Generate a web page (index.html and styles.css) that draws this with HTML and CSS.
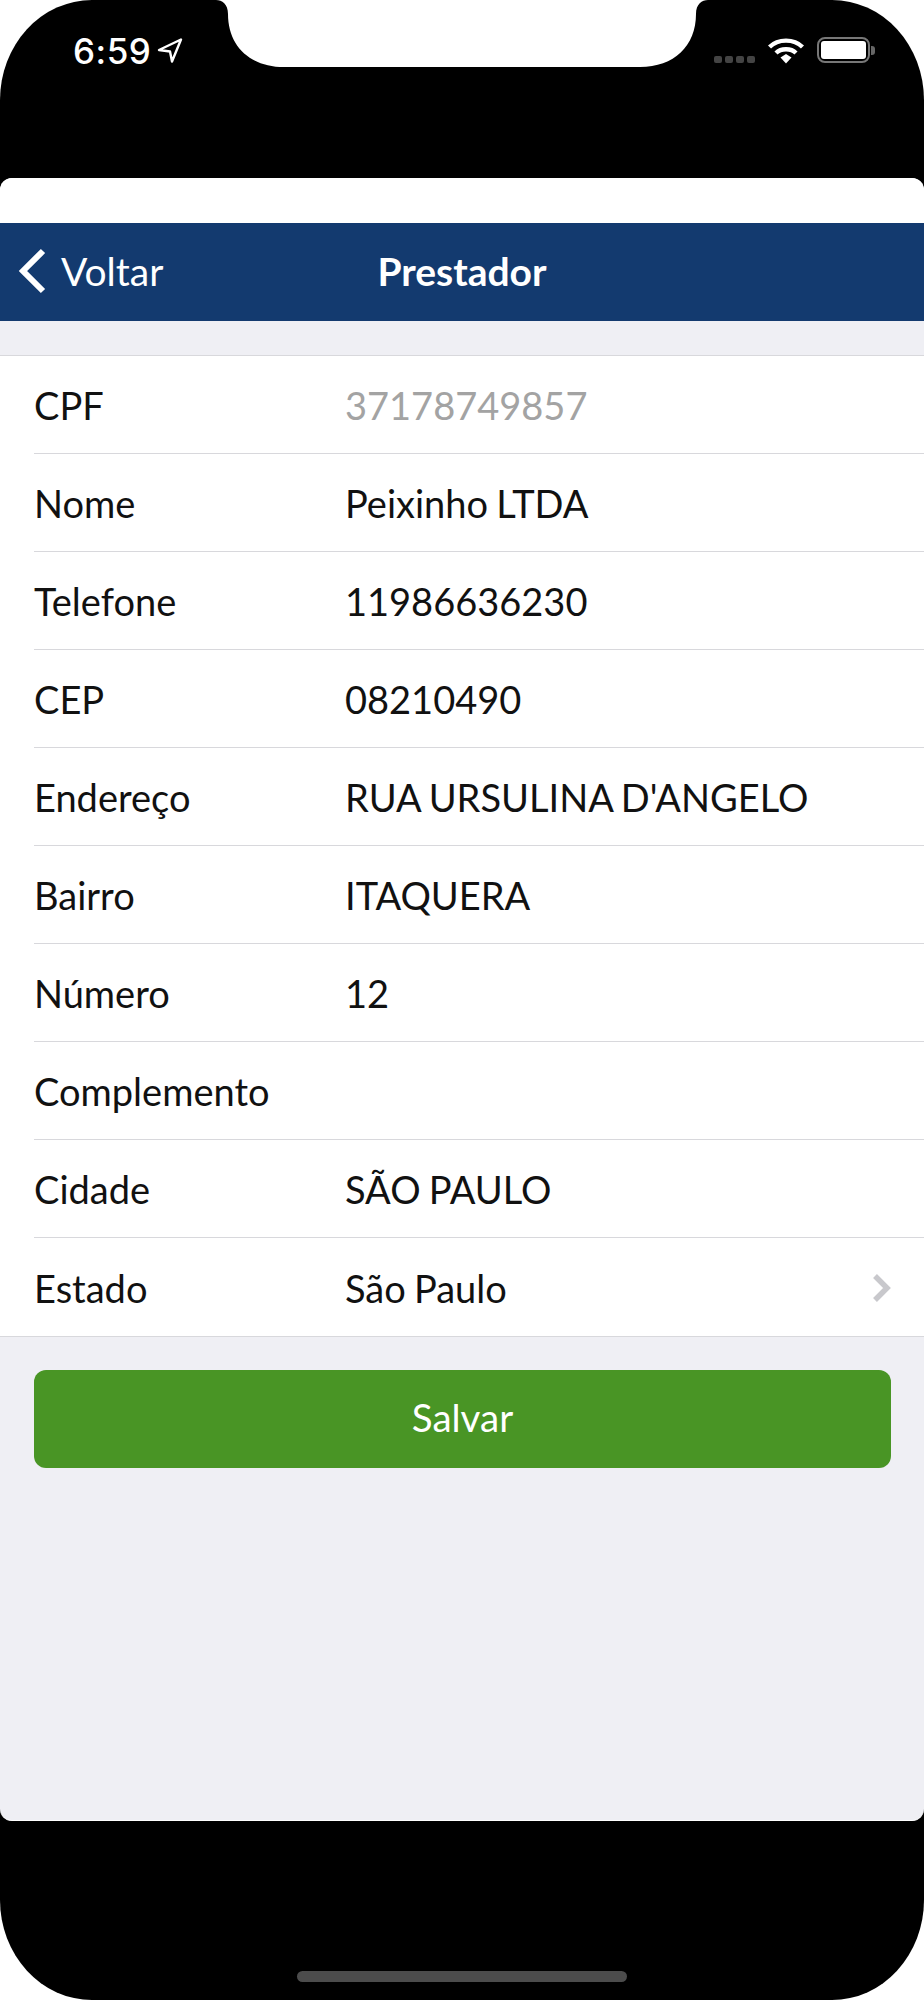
FILE: index.html
```html
<!DOCTYPE html>
<html lang="en">

<head>
    <meta charset="UTF-8">
    <meta name="viewport" content="width=device-width, initial-scale=1.0">
    <title>Prestador</title>
    <link rel="stylesheet" href="styles.css">
</head>

<body>
    <div class="phone">
        <svg class="notch" width="492" height="68" viewBox="0 0 492 68">
            <path d="M0 0 C6 0 12 4 12 14 C12 46 34 67 68 67 L424 67 C458 67 480 46 480 14 C480 4 486 0 492 0 Z" fill="#fff"/>
        </svg>
        <div class="status-bar">
            <div class="status-left">
                <span class="clock">6:59</span>
                <svg class="location" width="26" height="25" viewBox="0 0 26 25">
                    <path d="M24 1.500 L2 12 L13 13.500 L15 23.500 Z" fill="none" stroke="#fff" stroke-width="2.400" stroke-linejoin="round"/>
                </svg>
            </div>
            <div class="status-right">
                <div class="signal"><i></i><i></i><i></i><i></i></div>
                <svg class="wifi" width="36" height="27" viewBox="0 0 36 27">
                    <path d="M1.500 10 C10 1.500 26 1.500 34.500 10" fill="none" stroke="#fff" stroke-width="4.400"/>
                    <path d="M8 16 C13 11 23 11 28 16" fill="none" stroke="#fff" stroke-width="4.400"/>
                    <path d="M12.500 20.500 L18 17 L23.500 20.500 L18 26.500 Z" fill="#fff"/>
                </svg>
                <div class="battery"><div class="battery-fill"></div></div>
                <div class="battery-cap"></div>
            </div>
        </div>

        <div class="sheet">
            <div class="sheet-top"></div>
            <header class="navbar">
                <div class="back">
                    <svg width="30" height="46" viewBox="0 0 30 46">
                        <path d="M26 3 L6 23 L26 43" fill="none" stroke="#fff" stroke-width="6"/>
                    </svg>
                    <span>Voltar</span>
                </div>
                <h1>Prestador</h1>
            </header>

            <div class="form">
                <div class="row"><div class="row-inner"><span class="label">CPF</span><span class="value muted">37178749857</span></div></div>
                <div class="row"><div class="row-inner"><span class="label">Nome</span><span class="value">Peixinho LTDA</span></div></div>
                <div class="row"><div class="row-inner"><span class="label">Telefone</span><span class="value">11986636230</span></div></div>
                <div class="row"><div class="row-inner"><span class="label">CEP</span><span class="value">08210490</span></div></div>
                <div class="row"><div class="row-inner"><span class="label">Endereço</span><span class="value">RUA URSULINA D'ANGELO</span></div></div>
                <div class="row"><div class="row-inner"><span class="label">Bairro</span><span class="value">ITAQUERA</span></div></div>
                <div class="row"><div class="row-inner"><span class="label">Número</span><span class="value">12</span></div></div>
                <div class="row"><div class="row-inner"><span class="label">Complemento</span><span class="value"></span></div></div>
                <div class="row"><div class="row-inner"><span class="label">Cidade</span><span class="value">SÃO PAULO</span></div></div>
                <div class="row"><div class="row-inner"><span class="label">Estado</span><span class="value">São Paulo</span>
                    <svg class="chevron" width="18" height="28" viewBox="0 0 18 28">
                        <path d="M2 2 L14 14 L2 26" fill="none" stroke="#c8c8cc" stroke-width="5.500"/>
                    </svg>
                </div></div>
            </div>

            <button class="save" type="button">Salvar</button>
        </div>

        <div class="home-bar"></div>
    </div>
</body>

</html>
```

FILE: styles.css
```css
* {
    box-sizing: border-box;
}

body {
    margin: 0;
    background-color: #fff;
    font-family: Lato, "Open Sans", sans-serif;
}

.phone {
    position: relative;
    display: flex;
    flex-direction: column;
    width: 924px;
    height: 2000px;
    background-color: #000;
    border-radius: 92px / 100px;
    overflow: hidden;
}

.notch {
    position: absolute;
    top: 0;
    left: 216px;
}

.status-bar {
    display: flex;
    justify-content: space-between;
    height: 178px;
    padding: 36px 49px 0 73px;
}

.status-left,
.status-right {
    display: flex;
    align-items: flex-start;
}

.clock {
    color: #fff;
    font-family: Inter, "Liberation Sans", sans-serif;
    font-size: 35px;
    line-height: 30px;
    font-weight: 500;
    letter-spacing: 0.5px;
}

.location {
    margin: 2px 0 0 6px;
}

.signal {
    display: flex;
    gap: 3px;
    margin: 20px 13px 0 0;
}

.signal i {
    display: block;
    width: 8px;
    height: 7px;
    border-radius: 2px;
    background-color: #444;
}

.wifi {
    margin: 1px 13px 0 0;
}

.battery {
    width: 53px;
    height: 26px;
    padding: 2px;
    margin-top: 1px;
    border: 2px solid #777;
    border-radius: 8px;
}

.battery-fill {
    height: 100%;
    background-color: #fff;
    border-radius: 3px;
}

.battery-cap {
    width: 4px;
    height: 9px;
    margin: 10px 0 0 1px;
    background-color: #666;
    border-radius: 0 3px 3px 0;
}

.sheet {
    display: flex;
    flex-direction: column;
    height: 1643px;
    background-color: #efeff4;
    border-bottom: 1px solid #fff;
    border-radius: 12px;
    overflow: hidden;
}

.sheet-top {
    height: 45.3px;
    background-color: #fff;
}

.navbar {
    position: relative;
    display: flex;
    align-items: center;
    justify-content: center;
    height: 97.5px;
    padding-bottom: 2px;
    background-color: #133a6f;
    color: #fff;
}

.navbar h1 {
    margin: 0;
    font-size: 39px;
    font-weight: 700;
}

.back {
    position: absolute;
    top: 0;
    bottom: 2px;
    left: 17px;
    display: flex;
    align-items: center;
    gap: 14px;
    font-size: 39px;
}

.form {
    margin-top: 34.5px;
    background-color: #fff;
    border-top: 1px solid #d8d8dc;
    border-bottom: 1px solid #d8d8dc;
}

.row {
    padding-left: 34px;
}

.row-inner {
    display: flex;
    align-items: center;
    height: 98px;
    padding: 1px 33px 0 0;
    border-bottom: 1px solid #d8d8dc;
}

.row:last-child .row-inner {
    border-bottom: none;
}

.label {
    width: 311px;
    color: #111;
    font-size: 38px;
}

.value {
    flex: 1;
    color: #111;
    font-size: 38px;
    word-spacing: -1.5px;
}

.muted {
    color: #a3a3a3;
}

.save {
    height: 98px;
    padding-bottom: 5px;
    margin: 33px 33px 0 34px;
    background-color: #499525;
    color: #fff;
    border: none;
    border-radius: 12px;
    font-family: inherit;
    font-size: 38.500px;
}

.home-bar {
    position: absolute;
    left: 297px;
    bottom: 18px;
    width: 330px;
    height: 11px;
    background-color: #4c4c4c;
    border-radius: 6px;
}
```
